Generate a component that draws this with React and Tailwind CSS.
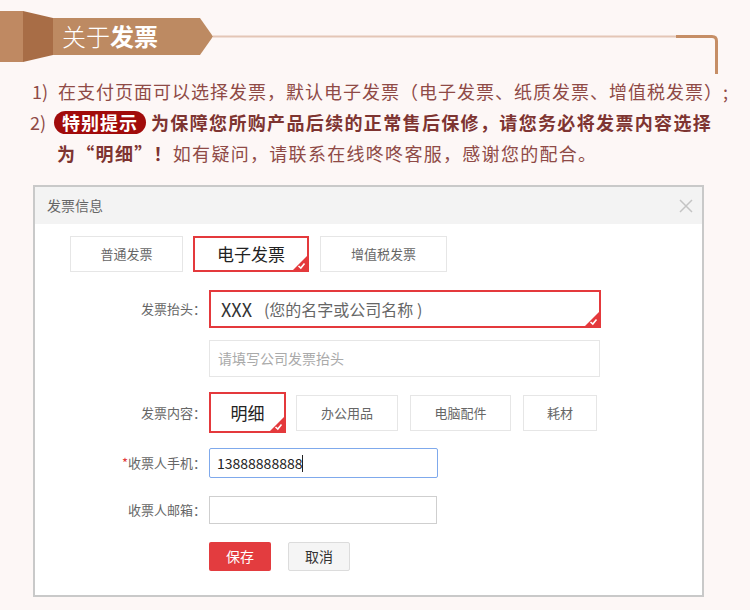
import React from "react";

const cjk = { fontFamily: '"Noto Sans CJK SC", "Noto Sans", sans-serif' };

function Tick() {
  return (
    <svg className="absolute right-0 bottom-0" width="14" height="14" viewBox="0 0 14 14">
      <polygon points="14,0 14,14 0,14" fill="#e4393c" />
      <path d="M5.5 10 L7.8 12 L11.5 7.5" stroke="#fff" strokeWidth="1.6" fill="none" />
    </svg>
  );
}

function Choice({ label, selected, w }) {
  if (selected) {
    return (
      <div className={`relative flex items-center justify-center border-2 border-[#e4393c] bg-white text-[17px] text-[#222] h-[41px] ${w}`}>
        {label}
        <Tick />
      </div>
    );
  }
  return (
    <div className={`flex items-center justify-center border border-[#e6e6e6] bg-white text-[13px] text-[#666] h-[36px] ${w}`}>
      {label}
    </div>
  );
}

function Row({ label, star, children, className = "" }) {
  return (
    <div className={`flex items-center ${className}`}>
      <div className="w-[174px] shrink-0 text-right text-[13px] text-[#666] pr-[3px]">
        {star && <span className="text-[#e4393c]">*</span>}
        {label}
      </div>
      {children}
    </div>
  );
}

export default function App() {
  return (
    <div className="w-[750px] h-[610px] bg-[#fdf7f6] overflow-hidden" style={cjk}>
      {/* 标题条 */}
      <div className="relative h-[76px]">
        <svg className="absolute inset-0" width="750" height="76" viewBox="0 0 750 76">
          <rect x="0" y="11" width="23" height="51" fill="#bf8962" />
          <polygon points="23,11 53,18 53,55 23,62" fill="#a86d46" />
          <polygon points="53,18 200,18 213,36.5 200,55 53,55" fill="#bd8a62" />
          <line x1="213" y1="36.5" x2="676" y2="36.5" stroke="#e4c6b6" strokeWidth="2" />
          <path d="M676 36.5 H712 Q716.5 36.5 716.5 41 V74" stroke="#c68e66" strokeWidth="3" fill="none" />
        </svg>
        <div className="absolute left-[62px] top-[20px] text-[24px] leading-[32px] text-white">
          <span className="font-light">关于</span><span className="font-bold">发票</span>
        </div>
      </div>

      {/* 说明文字 */}
      <div className="pl-[30px] text-[18px] text-[#8f4a46]">
        <p className="leading-[30px] h-[30px] whitespace-nowrap">
          <span className="inline-block w-[28px] pl-[2px]">1)</span>
          <span className="tracking-[1px]">在支付页面可以选择发票，默认电子发票（电子发票、纸质发票、增值税发票）;</span>
        </p>
        <p className="flex items-center leading-[30px] h-[30px] mt-[1px] whitespace-nowrap">
          <span className="inline-block w-[24px]">2)</span>
          <span className="inline-flex items-center h-[23px] px-[8px] rounded-full bg-[#a10b0b] text-white font-bold text-[18px] tracking-[1px] leading-[23px]">
            特别提示
          </span>
          <span className="ml-[5px] font-bold text-[#7e3431] tracking-[1.35px]">
            为保障您所购产品后续的正常售后保修，请您务必将发票内容选择
          </span>
        </p>
        <p className="leading-[32px] h-[32px] pl-[27px] whitespace-nowrap tracking-[1.3px]">
          <span className="font-bold text-[#7e3431]">为“明细”！</span>
          <span>如有疑问，请联系在线咚咚客服，感谢您的配合。</span>
        </p>
      </div>

      {/* 发票信息弹窗 */}
      <div className="ml-[33px] mt-[16px] w-[671px] h-[412px] border-2 border-[#c9c9c9] bg-white">
        <div className="flex items-center justify-between h-[37px] bg-[#f3f3f3] pl-[12px] pr-[9px]">
          <span className="text-[14px] text-[#666]">发票信息</span>
          <svg width="14" height="14" viewBox="0 0 14 14">
            <path d="M1 1 L13 13 M13 1 L1 13" stroke="#c4c4c4" strokeWidth="1.5" />
          </svg>
        </div>

        <div className="flex items-center gap-[10px] pl-[35px] mt-[12px] h-[36px]">
          <Choice label="普通发票" w="w-[113px]" />
          <Choice label="电子发票" w="w-[116px] !h-[36px]" selected />
          <Choice label="增值税发票" w="w-[127px] ml-[1px]" />
        </div>

        <Row label="发票抬头：" className="mt-[18px]">
          <div className="relative flex items-center w-[392px] h-[38px] border-2 border-[#e4393c] pl-[10px]">
            <span className="text-[18px] text-[#333]">XXX</span>
            <span className="ml-[12px] text-[16px] text-[#666]">(您的名字或公司名称 )</span>
            <Tick />
          </div>
        </Row>

        <Row label="" className="mt-[12px]">
          <div className="flex items-center w-[391px] h-[37px] border border-[#e6e6e6] pl-[8px] text-[14px] text-[#aaa]">
            请填写公司发票抬头
          </div>
        </Row>

        <Row label="发票内容：" className="mt-[15px] h-[41px]">
          <div className="flex items-center">
            <Choice label="明细" w="w-[77px]" selected />
            <Choice label="办公用品" w="w-[102px] ml-[10px]" />
            <Choice label="电脑配件" w="w-[101px] ml-[12px]" />
            <Choice label="耗材" w="w-[74px] ml-[12px]" />
          </div>
        </Row>

        <Row label="收票人手机：" star className="mt-[15px]">
          <div className="flex items-center w-[229px] h-[30px] border border-[#7fa9ec] rounded-[2px] pl-[7px] text-[14px] text-[#222]">
            13888888888
            <span className="inline-block w-[1px] h-[17px] bg-[#222]" />
          </div>
        </Row>

        <Row label="收票人邮箱：" className="mt-[18px]">
          <div className="w-[228px] h-[28px] border border-[#cfcfcf]" />
        </Row>

        <Row label="" className="mt-[18px]">
          <div className="flex items-center gap-[17px]">
            <button className="w-[62px] h-[29px] rounded-[2px] bg-[#e33c3f] text-white text-[14px]">保存</button>
            <button className="w-[62px] h-[29px] rounded-[2px] bg-[#f5f5f5] border border-[#dcdcdc] text-[#333] text-[14px]">取消</button>
          </div>
        </Row>
      </div>
    </div>
  );
}
